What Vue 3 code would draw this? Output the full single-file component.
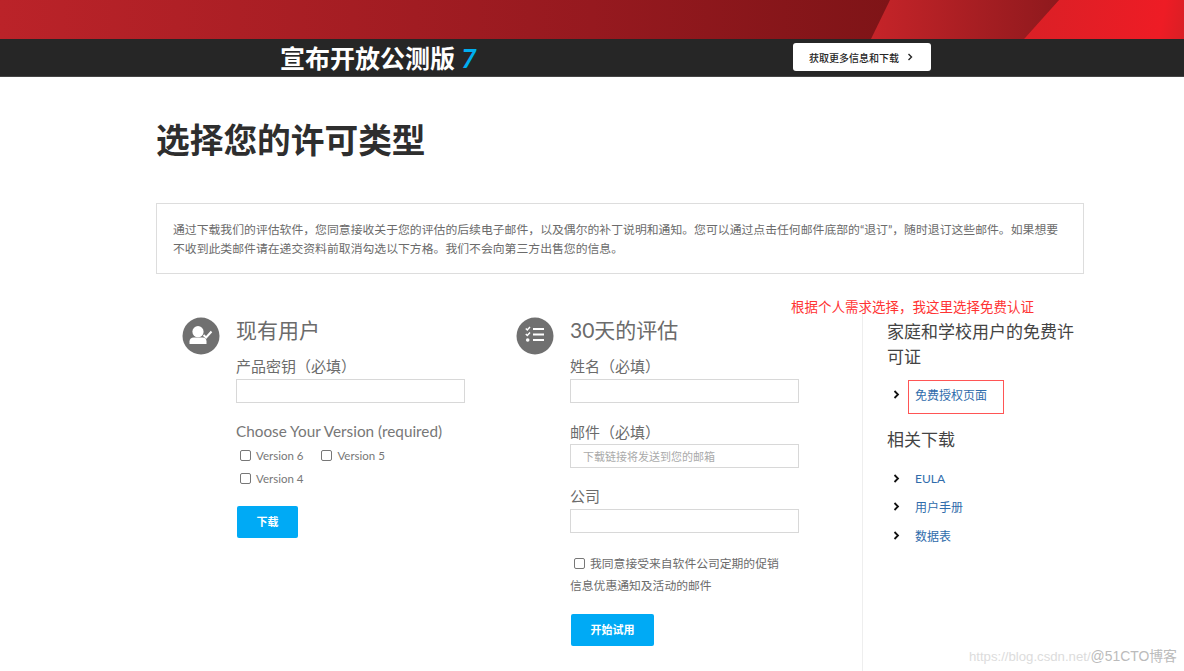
<template>
  <div class="page">
    <!-- Promo banner -->
    <div class="band">
      <span class="band-shape band-shape-a"></span>
      <span class="band-shape band-shape-b"></span>
    </div>
    <div class="bar">
      <div class="bar-title">宣布开放公测版 <em>7</em></div>
      <a class="bar-btn">
        获取更多信息和下载
        <svg width="6" height="8" viewBox="0 0 6 8"><path d="M1.5 1 4.5 4 1.5 7" /></svg>
      </a>
    </div>

    <main class="main">
      <h1>选择您的许可类型</h1>
      <p class="notice">
        通过下载我们的评估软件，您同意接收关于您的评估的后续电子邮件，以及偶尔的补丁说明和通知。您可以通过点击任何邮件底部的“退订”，随时退订这些邮件。如果想要不收到此类邮件请在递交资料前取消勾选以下方格。我们不会向第三方出售您的信息。
      </p>

      <div class="columns">
        <!-- Existing users -->
        <section class="col col-user">
          <svg class="round-icon" viewBox="0 0 38 38">
            <circle cx="19" cy="19" r="18.5" fill="#707070" />
            <circle cx="16" cy="14.7" r="5.6" fill="#fff" />
            <path d="M7.5 27v-2.5c0-2.6 2-4 4.2-4h9c2.3 0 3.8 1.5 3.8 4V27z" fill="#fff" />
            <path d="M21.5 18l2.6 2.5 5.400-6" fill="none" stroke="#fff" stroke-width="2" />
          </svg>
          <div class="col-body">
            <h2>现有用户</h2>
            <label class="field-label first">产品密钥（必填）</label>
            <input class="text-input" type="text" />
            <div class="field-label choose">Choose Your Version (required)</div>
            <div class="versions">
              <label v-for="v in versions" :key="v" class="check">
                <input type="checkbox" />
                <span>Version {{ v }}</span>
              </label>
            </div>
            <button class="action action-download">下载</button>
          </div>
        </section>

        <!-- Evaluation -->
        <section class="col col-trial">
          <svg class="round-icon" viewBox="0 0 38 38">
            <circle cx="19" cy="19" r="18.5" fill="#707070" />
            <path d="M17 12h11M17 17.5h11M17 23h11" fill="none" stroke="#fff" stroke-width="2" />
            <path d="M9.8 11.5l1.5 1.5 2.7-3M9.8 17l1.5 1.5 2.7-3" fill="none" stroke="#fff" stroke-width="1.5" />
            <circle cx="11.7" cy="23" r="1.8" fill="#fff" />
          </svg>
          <div class="col-body">
            <h2>30天的评估</h2>
            <label class="field-label first">姓名（必填）</label>
            <input class="text-input" type="text" />
            <label class="field-label next">邮件（必填）</label>
            <input class="text-input" type="text" placeholder="下载链接将发送到您的邮箱" />
            <label class="field-label next company">公司</label>
            <input class="text-input" type="text" />
            <div class="consent">
              <input type="checkbox" />
              <span>我同意接受来自软件公司定期的促销</span>
              <div>信息优惠通知及活动的邮件</div>
            </div>
            <button class="action action-trial">开始试用</button>
          </div>
        </section>

        <!-- Side links -->
        <aside class="side">
          <h3>家庭和学校用户的免费许可证</h3>
          <ul class="links links-free">
            <li>
              <svg width="7" height="9" viewBox="0 0 7 9"><path d="M1.5 1 5 4.5 1.5 8" /></svg>
              <a>免费授权页面</a>
              <span class="red-box"></span>
            </li>
          </ul>
          <h3 class="related">相关下载</h3>
          <ul class="links">
            <li v-for="link in related" :key="link">
              <svg width="7" height="9" viewBox="0 0 7 9"><path d="M1.5 1 5 4.5 1.5 8" /></svg>
              <a>{{ link }}</a>
            </li>
          </ul>
        </aside>
      </div>
    </main>

    <!-- Screenshot annotations -->
    <div class="annotation">根据个人需求选择，我这里选择免费认证</div>
    <div class="watermark">https://blog.csdn.net/<b>@51CTO博客</b></div>
  </div>
</template>

<script setup>
const versions = [6, 5, 4]
const related = ['EULA', '用户手册', '数据表']
</script>

<style>
html,
body {
  margin: 0;
  background: #fff;
}
</style>

<style scoped>
.page {
  position: relative;
  width: 1184px;
  height: 671px;
  overflow: hidden;
  background: #fff;
  color: #6b6b6b;
  font-family: Lato, "Noto Sans CJK SC", sans-serif;
}

.band {
  position: relative;
  height: 39px;
  background: linear-gradient(90deg, #bb2329 0%, #96191f 50%, #7e1417 76%);
  overflow: hidden;
}

.band-shape {
  position: absolute;
  top: 0;
  bottom: 0;
}

.band-shape-a {
  left: 871px;
  width: 190px;
  background: linear-gradient(90deg, #c62429, #8e191d);
  clip-path: polygon(19px 0, 188px 0, 153px 100%, 0 100%);
}

.band-shape-b {
  left: 1024px;
  right: 0;
  background: linear-gradient(100deg, #d92026, #ee1c25 85%, #d91f25);
  clip-path: polygon(35px 0, 100% 0, 100% 100%, 0 100%);
}

.bar {
  display: flex;
  align-items: center;
  height: 38px;
  background: #262626;
  border-bottom: 1px solid #444;
  box-sizing: border-box;
}

.bar-title {
  margin-left: 280px;
  width: 513px;
  color: #fff;
  font-size: 25px;
  font-weight: 700;
  line-height: 38px;
  white-space: nowrap;
}

.bar-title em {
  color: #00aeef;
  font-style: italic;
  font-size: 27px;
}

.bar-btn {
  display: flex;
  align-items: center;
  justify-content: space-between;
  box-sizing: border-box;
  width: 138px;
  height: 28px;
  margin-top: -1px;
  padding: 0 18px 0 16px;
  background: #fff;
  border-radius: 3px;
  color: #262626;
  font-size: 10px;
  font-weight: 500;
}

.bar-btn svg path {
  fill: none;
  stroke: #262626;
  stroke-width: 1.4;
}

.main {
  width: 928px;
  margin-left: 156px;
}

h1 {
  margin: 0;
  padding-top: 39px;
  color: #2e2e2e;
  font-size: 33.7px;
  font-weight: 700;
  line-height: 48px;
}

.notice {
  box-sizing: border-box;
  height: 71px;
  margin: 39px 0 0;
  padding: 17px 16px 0;
  border: 1px solid #ddd;
  color: #6b6b6b;
  font-size: 11.85px;
  line-height: 18.5px;
}

.columns {
  display: flex;
  margin-top: 32px;
}

.col {
  display: flex;
  gap: 16px;
  padding-top: 11px;
}

.col-user {
  width: 283px;
  margin-left: 26px;
}

.col-trial {
  width: 282px;
  margin-left: 51px;
}

.round-icon {
  flex: none;
  width: 38px;
  height: 38px;
}

.col-body {
  width: 229px;
}

h2 {
  margin: 0;
  height: 26px;
  font-size: 21px;
  font-weight: 400;
  line-height: 26px;
}

.field-label {
  display: block;
  font-size: 15px;
  line-height: 20px;
}

.field-label.first {
  margin-top: 13px;
  margin-bottom: 3px;
}

.field-label.next {
  margin-top: 19px;
  margin-bottom: 2px;
}

.field-label.company {
  margin-top: 18px;
  margin-bottom: 3px;
}

.field-label.choose {
  margin-top: 18px;
  font-size: 15.3px;
  color: #777;
}

.text-input {
  display: block;
  box-sizing: border-box;
  width: 229px;
  height: 24px;
  padding: 0 12px;
  border: 1px solid #d8d8d8;
  border-radius: 0;
  outline: none;
  font-family: inherit;
  font-size: 11px;
}

.text-input::placeholder {
  color: #aaa;
}

.versions {
  display: flex;
  flex-wrap: wrap;
  width: 200px;
  margin-top: 3px;
  padding-left: 4px;
}

.check {
  display: flex;
  align-items: center;
  gap: 5px;
  height: 23px;
  margin-right: 18px;
  color: #777;
  font-size: 11.5px;
}

input[type="checkbox"] {
  appearance: none;
  flex: none;
  box-sizing: border-box;
  width: 11px;
  height: 11px;
  margin: 0;
  border: 1px solid #777;
  border-radius: 2px;
  background: #fff;
}

.action {
  display: block;
  height: 32px;
  padding: 0 0 2px;
  border: 0;
  border-radius: 2px;
  background: #00aaf5;
  color: #fff;
  font-family: inherit;
  font-size: 11px;
  font-weight: 700;
}

.action-download {
  width: 61px;
  margin: 16px 0 0 1px;
}

.action-trial {
  width: 83px;
  margin: 17px 0 0 1px;
}

.consent {
  margin-top: 20px;
  font-size: 11.8px;
  line-height: 22px;
}

.consent input {
  margin: 0 5px 0 4px;
  vertical-align: -1px;
}

.side {
  box-sizing: border-box;
  width: 222px;
  height: 367px;
  margin-left: 64px;
  padding: 13px 2px 0 24px;
  border-left: 1px solid #eee;
}

h3 {
  margin: 0;
  color: #444;
  font-size: 17px;
  font-weight: 400;
  line-height: 25px;
}

.links {
  margin: 0;
  padding: 0 0 0 6px;
  list-style: none;
}

.links li {
  position: relative;
  display: flex;
  align-items: center;
  gap: 15px;
  height: 28.7px;
  font-size: 12px;
}

.links a {
  color: #2f6cab;
}

.links svg path {
  fill: none;
  stroke: #111;
  stroke-width: 1.8;
}

.links-free {
  margin-top: 11px;
}

.red-box {
  position: absolute;
  left: 15px;
  top: 0;
  box-sizing: border-box;
  width: 96px;
  height: 34px;
  border: 1px solid #f55;
}

.related {
  margin-top: 18px;
  margin-bottom: 12px;
}

.annotation {
  position: absolute;
  left: 791px;
  top: 298px;
  color: #f33;
  font-size: 13.5px;
  line-height: 18px;
  white-space: nowrap;
}

.watermark {
  position: absolute;
  right: 7px;
  bottom: 5px;
  color: #dcdcdc;
  font-family: "Liberation Sans", "Noto Sans CJK SC", sans-serif;
  font-size: 13.2px;
  line-height: 18px;
  white-space: nowrap;
}

.watermark b {
  color: #bbb;
  font-size: 13.9px;
  font-weight: 400;
}
</style>
